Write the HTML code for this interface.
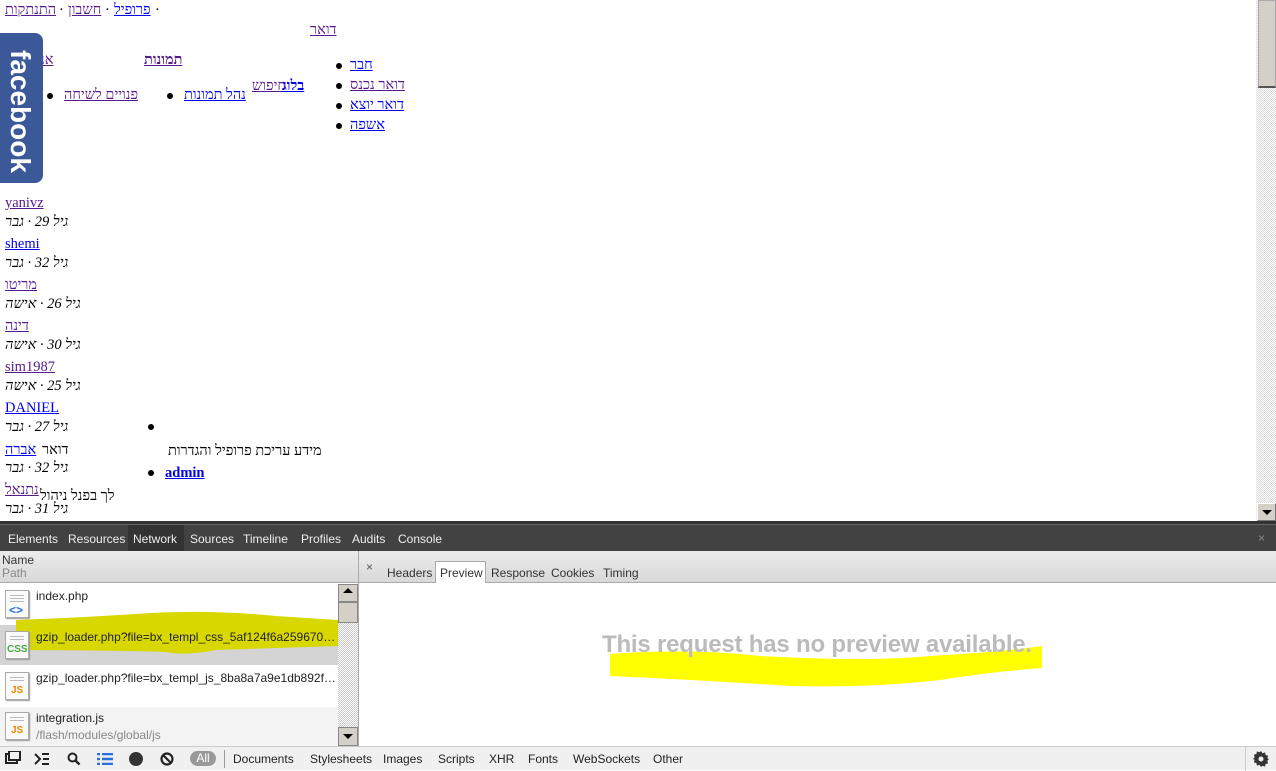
<!DOCTYPE html>
<html><head><meta charset="utf-8"><style>
*{margin:0;padding:0;box-sizing:border-box}
body{width:1276px;height:770px;overflow:hidden;background:#fff;position:relative;font-family:"Liberation Serif","DejaVu Serif",serif;font-size:14.5px}
.a{position:absolute;white-space:nowrap;line-height:16px}
a,.l{color:#551a8b;text-decoration:underline}
.b{color:#00e}
.bul{position:absolute;width:6px;height:6px;border-radius:50%;background:#000}
.it{font-style:italic;color:#000}
.dv{font-family:"Liberation Sans","DejaVu Sans",sans-serif;font-size:12px}
.ico{position:absolute;left:5px;width:24px;height:28px;background:#fafafa;border:1px solid #aaa;box-shadow:1px 1px 1px #999}
.ico i{position:absolute;left:4px;right:4px;height:1px;background:#bbb}
.pg{position:absolute;left:0;top:2px;width:1256px;height:519px;overflow:hidden}
.tr{overflow:hidden;text-overflow:ellipsis;width:302px}
</style></head><body>
<div class="pg">
<div class="a l" style="left:5px;top:0">התנתקות</div>
<div class="a" style="left:59px;top:0">·</div>
<div class="a l" style="left:68px;top:0">חשבון</div>
<div class="a" style="left:105px;top:0">·</div>
<div class="a l b" style="left:114px;top:0">פרופיל</div>
<div class="a" style="left:155px;top:0">·</div>
<div class="a l" style="left:310px;top:20px">דואר</div>
<div class="a l" style="left:40px;top:50px">אנ</div>
<div class="a l" style="left:144px;top:50px;font-weight:bold">תמונות</div>
<div class="bul" style="left:336px;top:61px"></div><div class="a l b" style="left:350px;top:55px">חבר</div>
<div class="bul" style="left:336px;top:81px"></div><div class="a l" style="left:350px;top:75px">דואר נכנס</div>
<div class="bul" style="left:336px;top:101px"></div><div class="a l b" style="left:350px;top:95px">דואר יוצא</div>
<div class="bul" style="left:336px;top:121px"></div><div class="a l b" style="left:350px;top:115px">אשפה</div>
<div class="a l" style="left:252px;top:76px">חיפוש</div>
<div class="a l b" style="left:282px;top:76px;font-weight:bold">בלוג</div>
<div class="bul" style="left:167px;top:91px"></div><div class="a l b" style="left:184px;top:85px">נהל תמונות</div>
<div class="bul" style="left:47px;top:91px"></div><div class="a l" style="left:64px;top:85px">פנויים לשיחה</div>
<div class="a l" style="left:5px;top:193px">yanivz</div>
<div class="a it" style="left:5px;top:212px">גיל 29 · גבר</div>
<div class="a l b" style="left:5px;top:234px">shemi</div>
<div class="a it" style="left:5px;top:253px">גיל 32 · גבר</div>
<div class="a l" style="left:5px;top:275px">מריטו</div>
<div class="a it" style="left:5px;top:294px">גיל 26 · אישה</div>
<div class="a l" style="left:5px;top:316px">דינה</div>
<div class="a it" style="left:5px;top:335px">גיל 30 · אישה</div>
<div class="a l" style="left:5px;top:357px">sim1987</div>
<div class="a it" style="left:5px;top:376px">גיל 25 · אישה</div>
<div class="a l b" style="left:5px;top:398px">DANIEL</div>
<div class="a it" style="left:5px;top:417px">גיל 27 · גבר</div>
<div class="a l b" style="left:5px;top:440px">אברה</div><div class="a" style="left:42px;top:440px">דואר</div>
<div class="a it" style="left:5px;top:458px">גיל 32 · גבר</div>
<div class="a l" style="left:5px;top:480px">נתנאל</div>
<div class="a" style="left:40px;top:486px">לך בפנל ניהול</div>
<div class="a it" style="left:5px;top:499px">גיל 31 · גבר</div>
<div class="bul" style="left:148px;top:422px"></div>
<div class="a" style="left:168px;top:441px">מידע עריכת פרופיל והגדרות</div>
<div class="bul" style="left:148px;top:468px"></div><div class="a l b" style="left:165px;top:463px;font-weight:bold">admin</div>
</div>
<div style="position:absolute;left:0;top:33px;width:43px;height:150px;background:#3b5998;border-radius:0 8px 8px 0"></div>
<div style="position:absolute;left:3px;top:50px;width:30px;transform-origin:0 0;transform:translate(31px,0) rotate(90deg);color:#fff;font:bold 28px 'Liberation Sans',sans-serif;line-height:28px;white-space:nowrap">facebook</div>
<!-- page scrollbar -->
<div style="position:absolute;left:1256px;top:0;width:20px;height:521px;background:repeating-conic-gradient(#d8d8d8 0 25%,#fff 0 50%) 0 0/2px 2px;border-left:1px solid #eee"></div>
<div style="position:absolute;left:1258px;top:0;width:18px;height:88px;background:#d4d0c8;border:1px solid #aaa;border-bottom:2px solid #555"></div>
<div style="position:absolute;left:1257px;top:503px;width:19px;height:18px;background:#d4d0c8;border:1px solid #fff;border-right-color:#777;border-bottom-color:#777"></div>
<div style="position:absolute;left:1262px;top:510px;border:5px solid transparent;border-top:5px solid #000"></div>
<!-- devtools -->
<div style="position:absolute;left:0;top:521px;width:1276px;height:3px;background:#333"></div>
<div class="dv" style="position:absolute;left:0;top:524px;width:1276px;height:27px;background:#424242;border-top:1px solid #666;color:#eee">
<div style="position:absolute;left:128px;top:0;width:56px;height:26px;background:#333"></div>
<span class="a" style="left:8px;top:6px">Elements</span><span class="a" style="left:68px;top:6px">Resources</span><span class="a" style="left:133px;top:6px">Network</span><span class="a" style="left:190px;top:6px">Sources</span><span class="a" style="left:243px;top:6px">Timeline</span><span class="a" style="left:301px;top:6px">Profiles</span><span class="a" style="left:352px;top:6px">Audits</span><span class="a" style="left:398px;top:6px">Console</span>
<span class="a" style="left:1258px;top:5px;color:#888">×</span></div>
<div class="dv" style="position:absolute;left:0;top:551px;width:1276px;height:32px;background:linear-gradient(#ececec,#d8d8d8);border-bottom:1px solid #aaa;color:#333">
<span class="a" style="left:2px;top:3px;line-height:13px">Name</span><span class="a" style="left:2px;top:16px;line-height:13px;color:#888">Path</span>
<div style="position:absolute;left:358px;top:0;width:1px;height:32px;background:#aaa"></div>
<span class="a" style="left:366px;top:8px;color:#555">×</span>
<span class="a" style="left:387px;top:14px">Headers</span>
<div style="position:absolute;left:435px;top:10px;width:51px;height:22px;background:#fff;border:1px solid #aaa;border-bottom:none"></div>
<span class="a" style="left:440px;top:14px">Preview</span><span class="a" style="left:491px;top:14px">Response</span><span class="a" style="left:551px;top:14px">Cookies</span><span class="a" style="left:603px;top:14px">Timing</span></div>
<div style="position:absolute;left:358px;top:583px;width:1px;height:163px;background:#aaa"></div>
<!-- rows -->
<div class="dv" style="position:absolute;left:0;top:584px;width:338px;height:162px;color:#222;overflow:hidden">
<div style="position:absolute;left:0;top:0;width:338px;height:40px;background:#fff"></div>
<div style="position:absolute;left:0;top:41px;width:338px;height:40px;background:#d4d4d4"></div>
<div style="position:absolute;left:0;top:82px;width:338px;height:40px;background:#fff"></div>
<div style="position:absolute;left:0;top:123px;width:338px;height:39px;background:#f3f3f3"></div>
<svg style="position:absolute;left:16px;top:26px" width="322" height="46"><path d="M0 10 Q60 8 120 4 Q190 -1 260 6 L322 10 L322 36 Q260 38 200 40 Q170 46 150 42 Q80 40 0 40Z" fill="#d8d800"/></svg>
<div class="ico" style="top:6px"><i style="top:4px"></i><i style="top:7px"></i><i style="top:10px"></i><b style="position:absolute;left:3px;top:12px;color:#2a6fe0;font:bold 12px sans-serif">&lt;&gt;</b></div>
<span class="a" style="left:36px;top:4px">index.php</span>
<div class="ico" style="top:47px"><i style="top:4px"></i><i style="top:7px"></i><b style="position:absolute;left:1px;top:12px;color:#4a4;font:bold 10px sans-serif">CSS</b></div>
<span class="a tr" style="left:36px;top:45px">gzip_loader.php?file=bx_templ_css_5af124f6a259670c56a2b3c4d5</span>
<div class="ico" style="top:88px"><i style="top:4px"></i><i style="top:7px"></i><b style="position:absolute;left:5px;top:12px;color:#e80;font:bold 10px sans-serif">JS</b></div>
<span class="a tr" style="left:36px;top:86px">gzip_loader.php?file=bx_templ_js_8ba8a7a9e1db892f56f1a2b3c4</span>
<div class="ico" style="top:128px"><i style="top:4px"></i><i style="top:7px"></i><b style="position:absolute;left:5px;top:12px;color:#e80;font:bold 10px sans-serif">JS</b></div>
<span class="a" style="left:36px;top:126px">integration.js</span><span class="a" style="left:36px;top:143px;color:#888">/flash/modules/global/js</span>
</div>
<div style="position:absolute;left:338px;top:584px;width:20px;height:162px;background:repeating-conic-gradient(#c8c8c8 0 25%,#fff 0 50%) 0 0/2px 2px"></div>
<div style="position:absolute;left:338px;top:584px;width:20px;height:18px;background:#d4d0c8;border:1px solid #888"></div>
<div style="position:absolute;left:343px;top:588px;border:5px solid transparent;border-bottom:5px solid #000;border-top:0"></div>
<div style="position:absolute;left:338px;top:602px;width:20px;height:21px;background:#d4d0c8;border:1px solid #888"></div>
<div style="position:absolute;left:338px;top:727px;width:20px;height:19px;background:#d4d0c8;border:1px solid #888"></div>
<div style="position:absolute;left:343px;top:734px;border:5px solid transparent;border-top:5px solid #000;border-bottom:0"></div>
<!-- preview -->
<svg style="position:absolute;left:610px;top:640px" width="432" height="50"><path d="M0 14 Q80 8 150 16 Q260 22 320 16 Q390 12 432 6 L432 28 Q380 32 330 40 Q260 48 180 46 Q90 40 0 36Z" fill="#ffff00"/></svg>
<div class="a" style="left:602px;top:631px;font:bold 24px 'Liberation Sans',sans-serif;line-height:28px;color:#bbb;letter-spacing:-.2px">This request has no preview available.</div>
<!-- bottom bar -->
<div class="dv" style="position:absolute;left:0;top:746px;width:1276px;height:24px;background:#f0f0f0;border-top:1px solid #ccc;color:#222">
<svg style="position:absolute;left:5px;top:4px" width="16" height="16"><rect x="1" y="3" width="11" height="9" fill="none" stroke="#222" stroke-width="2"/><rect x="4" y="0" width="11" height="9" fill="#f0f0f0" stroke="#222" stroke-width="2"/></svg>
<svg style="position:absolute;left:34px;top:5px" width="16" height="14"><path d="M1 2l5 5-5 5" fill="none" stroke="#222" stroke-width="2"/><path d="M8 2h7M9 7h6M8 12h7" stroke="#222" stroke-width="2"/></svg>
<svg style="position:absolute;left:67px;top:5px" width="14" height="14"><circle cx="5.5" cy="5.5" r="4" fill="none" stroke="#222" stroke-width="2"/><path d="M8.5 8.5l4 4" stroke="#222" stroke-width="2.5"/></svg>
<svg style="position:absolute;left:97px;top:6px" width="16" height="12"><path d="M0 1h3M5 1h11M0 6h3M5 6h11M0 11h3M5 11h11" stroke="#2a6fe0" stroke-width="2.5"/></svg>
<div style="position:absolute;left:129px;top:5px;width:14px;height:14px;border-radius:50%;background:#333"></div>
<svg style="position:absolute;left:160px;top:5px" width="14" height="14"><circle cx="7" cy="7" r="5.5" fill="none" stroke="#222" stroke-width="2.2"/><path d="M3 3l8 8" stroke="#222" stroke-width="2.2"/></svg>
<div style="position:absolute;left:190px;top:4px;width:26px;height:15px;border-radius:8px;background:#999;color:#fff;text-align:center;line-height:15px">All</div>
<div style="position:absolute;left:224px;top:3px;width:1px;height:18px;background:#999"></div>
<span class="a" style="left:233px;top:4px">Documents</span><span class="a" style="left:310px;top:4px">Stylesheets</span><span class="a" style="left:383px;top:4px">Images</span><span class="a" style="left:438px;top:4px">Scripts</span><span class="a" style="left:489px;top:4px">XHR</span><span class="a" style="left:528px;top:4px">Fonts</span><span class="a" style="left:573px;top:4px">WebSockets</span><span class="a" style="left:653px;top:4px">Other</span>
<div style="position:absolute;left:1245px;top:0;width:1px;height:24px;background:#ccc"></div>
<svg style="position:absolute;left:1253px;top:4px" width="16" height="16" viewBox="0 0 16 16"><path d="M8 0l1.5 2.2 2.6-.8.4 2.6 2.6.6-.8 2.6L16 8l-1.7 1.8.8 2.6-2.6.6-.4 2.6-2.6-.8L8 16l-1.5-2.2-2.6.8-.4-2.6-2.6-.6.8-2.6L0 8l1.7-1.8-.8-2.6 2.6-.6.4-2.6 2.6.8z" fill="#333"/><circle cx="8" cy="8" r="2.5" fill="#f0f0f0"/></svg>
</div>
</body></html>
